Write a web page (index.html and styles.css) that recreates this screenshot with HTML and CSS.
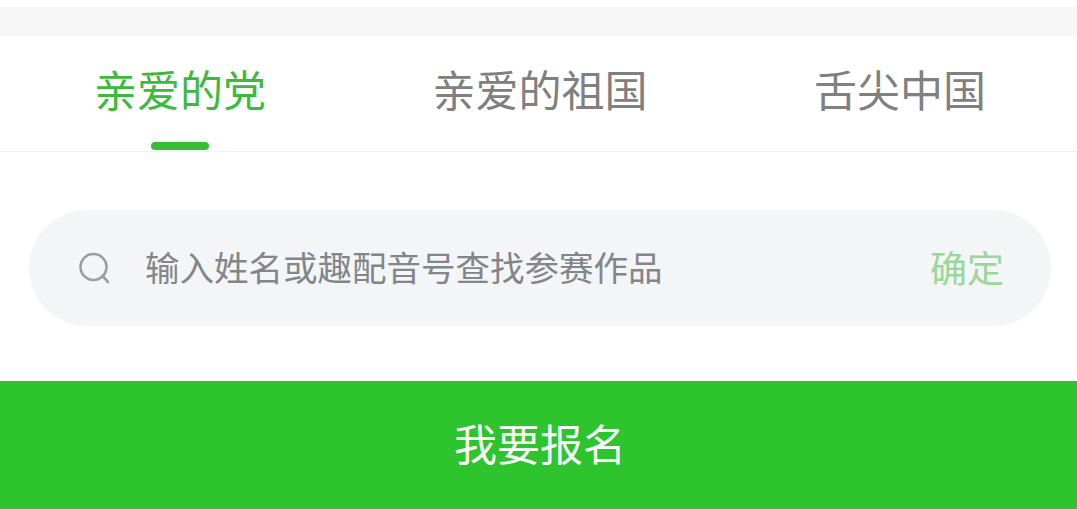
FILE: index.html
```html
<!DOCTYPE html>
<html>
<head>
    <meta charset="UTF-8">
    <meta name="viewport" content="width=device-width, initial-scale=1.0">
    <title>我要报名</title>
    <link rel="stylesheet" href="styles.css">
</head>
<body>
    <div class="top-strip"></div>
    <!-- Tabs -->
    <nav class="tabs">
        <a class="tab tab-active">亲爱的党</a>
        <a class="tab">亲爱的祖国</a>
        <a class="tab">舌尖中国</a>
    </nav>
    <!-- Search -->
    <section class="search-area">
        <div class="search-box">
            <svg class="search-icon" width="34" height="34" viewBox="0 0 34 34">
                <circle cx="16.5" cy="16" r="13" fill="none" stroke="#9b9fa2" stroke-width="2.6"/>
                <path d="M25.5 25l5.5 6" fill="none" stroke="#9b9fa2" stroke-width="2.6" stroke-linecap="round"/>
            </svg>
            <span class="search-text">输入姓名或趣配音号查找参赛作品</span>
            <span class="search-ok">确定</span>
        </div>
    </section>
    <button class="signup-btn">我要报名</button>
</body>
</html>
```

FILE: styles.css
```css
html, body {
    margin: 0;
    padding: 0;
}
body {
    width: 1077px;
    height: 509px;
    overflow: hidden;
    background-color: #fff;
    font-family: "Noto Sans CJK SC", "Noto Sans", sans-serif;
}
.top-strip {
    height: 29px;
    margin-top: 7px;
    background-color: #f7f7f7;
}
/* Tabs */
.tabs {
    height: 115px;
    display: grid;
    grid-template-columns: 360px 360px 360px;
    border-bottom: 1px solid #f1f2f2;
}
.tab {
    position: relative;
    padding-top: 22px;
    text-align: center;
    font-size: 43px;
    line-height: 60px;
    color: #808080;
}
.tab-active {
    color: #3dba3d;
}
.tab-active::after {
    content: "";
    position: absolute;
    left: 151px;
    bottom: 1px;
    width: 58px;
    height: 8px;
    border-radius: 4px;
    background-color: #35bd35;
}
/* Search */
.search-area {
    height: 229px;
    padding: 58px 26px 0 29px;
    box-sizing: border-box;
}
.search-box {
    height: 116px;
    display: flex;
    align-items: center;
    padding: 0 47px 0 48px;
    border-radius: 58px;
    background-color: #f3f5f6;
}
.search-icon {
    flex: none;
    margin-right: 34px;
}
.search-text {
    flex: 1;
    position: relative;
    top: -2px;
    font-size: 34.5px;
    color: #838689;
}
.search-ok {
    position: relative;
    top: -1px;
    font-size: 37px;
    color: #9ad79a;
}
.signup-btn {
    display: block;
    width: 100%;
    height: 128px;
    padding: 0 0 7px 3px;
    border: none;
    background-color: #2dc42d;
    color: #fbfffb;
    font-family: inherit;
    font-size: 43px;
}
```
